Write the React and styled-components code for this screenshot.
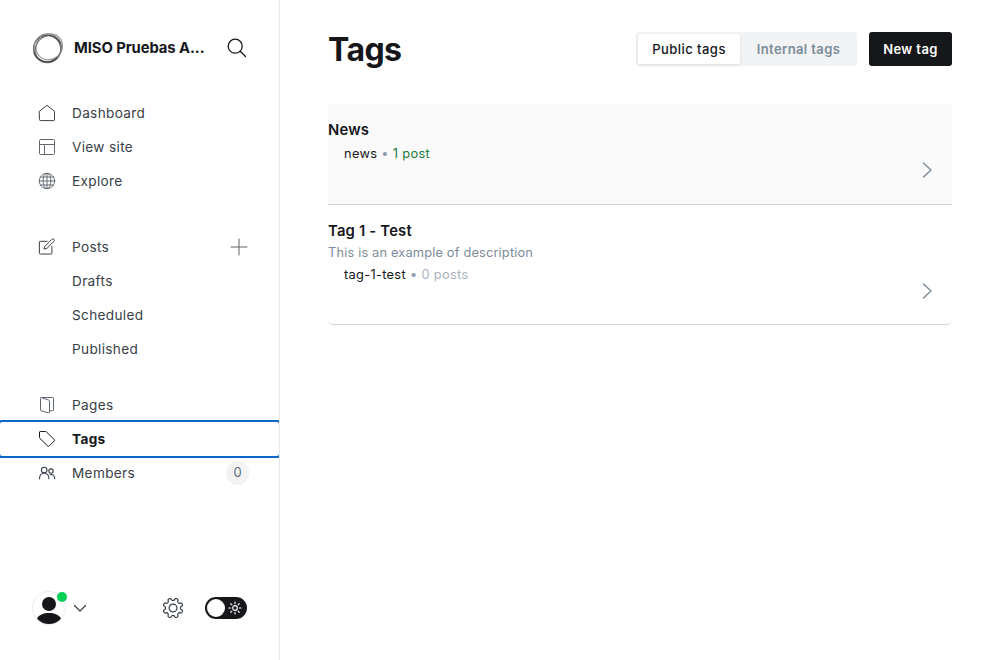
import React from "react";
import styled, { createGlobalStyle } from "styled-components";

const Global = createGlobalStyle`
  * { box-sizing: border-box; }
  body { margin: 0; background: #fff; font-family: Inter, "Liberation Sans", sans-serif; color: #15171a; -webkit-font-smoothing: antialiased; }
  h1, h3, p { margin: 0; }
  button { font-family: inherit; border: 0; cursor: pointer; }
  svg { display: block; fill: none; stroke: currentColor; stroke-linecap: round; stroke-linejoin: round; flex: none; }
`;

const Page = styled.div`
  display: flex;
  height: 660px;
  overflow: hidden;
`;
const Sidebar = styled.nav`
  width: 280px;
  flex: none;
  display: flex;
  flex-direction: column;
  overflow: hidden;
  border-right: 1px solid #e6e9eb;
`;
const Brand = styled.header`
  display: flex;
  align-items: center;
  height: 96px;
  padding: 0 32px;
`;
const SiteName = styled.div`
  margin-left: 10px;
  width: 134px;
  font-size: 14.8px;
  line-height: 20px;
  font-weight: 700;
  letter-spacing: -0.08px;
  white-space: nowrap;
`;
const SearchButton = styled.button`
  margin-left: auto;
  padding: 0;
  background: none;
  color: #15171a;
`;
const NavGroup = styled.div`
  display: flex;
  flex-direction: column;
  margin-bottom: ${(p) => p.$gap}px;
`;
const NavItem = styled.a`
  display: flex;
  align-items: center;
  height: 34px;
  padding: 0 30px 0 38px;
  font-size: 13.6px;
  letter-spacing: 0.34px;
  color: ${(p) => (p.$active ? "#15171a" : "#394047")};
  font-weight: ${(p) => (p.$active ? 700 : 400)};
  outline: ${(p) => (p.$active ? "2px solid #0a66c8" : "none")};
  border-radius: 2px;
`;
const NavLabel = styled.span`
  line-height: 20px;
  padding-bottom: 1px;
`;
const IconSlot = styled.span`
  width: 18px;
  margin-right: 16px;
  display: flex;
  justify-content: center;
  color: ${(p) => (p.$soft ? "#60676e" : "inherit")};
`;
const PlusSlot = styled.span`
  margin-left: auto;
  margin-right: 1px;
  color: #5d6369;
`;
const Count = styled.span`
  margin-left: auto;
  width: 23px;
  height: 24px;
  border-radius: 12px;
  background: #f1f3f4;
  color: #626d79;
  font-size: 13px;
  line-height: 23px;
  letter-spacing: 0;
  text-align: center;
`;
const Footer = styled.footer`
  display: flex;
  align-items: center;
  margin-top: auto;
  height: 104px;
  padding: 0 32px;
`;
const Avatar = styled.div`
  position: relative;
  width: 34px;
  height: 34px;
`;
const Presence = styled.span`
  position: absolute;
  top: 1px;
  right: -1px;
  width: 10px;
  height: 10px;
  border-radius: 50%;
  background: #00d154;
`;
const ChevronSlot = styled.span`
  margin-left: 7px;
  color: #394047;
`;
const GearSlot = styled.span`
  margin-left: auto;
  margin-right: 21px;
  color: #394047;
`;
const Toggle = styled.div`
  display: flex;
  align-items: center;
  justify-content: space-between;
  width: 42px;
  height: 22px;
  padding: 0 5px 0 2px;
  border-radius: 11px;
  background: #15171a;
  color: #fff;
`;
const Knob = styled.span`
  width: 18px;
  height: 18px;
  border-radius: 50%;
  background: #fff;
`;
const Main = styled.main`
  flex: 1;
  padding: 32px 48px;
`;
const TitleBar = styled.header`
  display: flex;
  align-items: center;
  height: 34px;
  margin-bottom: 38px;
`;
const Title = styled.h1`
  flex: 1;
  font-size: 32px;
  line-height: 36px;
  font-weight: 700;
  letter-spacing: -0.6px;
  padding-top: 2px;
`;
const Segment = styled.div`
  display: flex;
  width: 221px;
  height: 34px;
  padding: 2px;
  border-radius: 3px;
  background: #f1f3f4;
`;
const SegmentButton = styled.button`
  width: ${(p) => p.$width}px;
  padding: 0 0 0 ${(p) => (p.$on ? 0 : 2)}px;
  height: 30px;
  border-radius: 2px;
  font-size: 13px;
  font-weight: ${(p) => (p.$on ? 500 : 600)};
  letter-spacing: ${(p) => (p.$on ? 0.46 : 0.38)}px;
  background: ${(p) => (p.$on ? "#fff" : "transparent")};
  color: ${(p) => (p.$on ? "#15171a" : "#7c8b9a")};
  box-shadow: ${(p) => (p.$on ? "0 1px 4px -1px rgba(0,0,0,.15)" : "none")};
`;
const Primary = styled.button`
  width: 83px;
  height: 34px;
  margin-left: 12px;
  padding: 0;
  border-radius: 3px;
  background: #15171a;
  color: #fff;
  font-size: 13px;
  font-weight: 600;
  letter-spacing: 0.42px;
`;
const List = styled.div`
  display: flex;
  flex-direction: column;
`;
const Row = styled.article`
  display: flex;
  justify-content: space-between;
  height: ${(p) => p.$height}px;
  padding-top: 16px;
  border-bottom: 1px solid #ced4d9;
  background: ${(p) => (p.$hover ? "#fafafa" : "#fff")};
  border-radius: ${(p) => (p.$hover ? "5px 5px 0 0" : "0 0 5px 5px")};
`;
const TagName = styled.h3`
  font-size: 14.8px;
  line-height: 20px;
  font-weight: 600;
  letter-spacing: 0.2px;
`;
const Description = styled.p`
  padding-top: 2px;
  font-size: 12.8px;
  line-height: 20px;
  letter-spacing: 0.17px;
  color: #7c8b9a;
`;
const Meta = styled.p`
  padding: ${(p) => p.$top}px 0 0 16px;
  font-size: 12.8px;
  line-height: 20px;
  letter-spacing: 0.32px;
`;
const Dot = styled.span`
  color: #8e9cac;
  margin: 0 4px;
`;
const Posts = styled.span`
  color: ${(p) => (p.$some ? "#18793a" : "#abb4be")};
`;
const Arrow = styled.span`
  align-self: flex-end;
  margin: 0 20px ${(p) => p.$bottom}px 0;
  color: #7c8b9a;
`;

const I = ({ size = 18, w = 1, box = 18, children }) => (
  <svg width={size} height={size} viewBox={`0 0 ${box} ${box}`} strokeWidth={w}>{children}</svg>
);
const Logo = () => (
  <I size={32} box={32}>
    <circle cx="15.2" cy="17" r="13.6" stroke="#555" strokeWidth="1.3" />
    <ellipse cx="15.6" cy="16" rx="13.6" ry="14.3" stroke="#8a8a8a" strokeWidth="1.1" />
    <ellipse cx="17.3" cy="14.9" rx="12.6" ry="13.6" transform="rotate(50 17.3 14.9)" stroke="#999" strokeWidth="1.2" />
    <ellipse cx="15.5" cy="16.8" rx="14" ry="12.4" transform="rotate(-50 16 16)" stroke="#777" strokeWidth="1.2" />
    <path d="M2.3 21C5.5 29.5 17 33 25 26" stroke="#444" strokeWidth="1.2" />
    <path d="M10 4.3C17 1.5 26 4.5 28.5 12" stroke="#444" strokeWidth="0.9" />
  </I>
);
const Search = () => (
  <I size={20} box={20} w={1.3}><circle cx="8.2" cy="8.2" r="7" /><path d="M13.2 13.2 18.5 18.5" /></I>
);
const Home = () => <I><path d="M1.5 7.2 9 1.3l7.5 5.9v8.6a.8.8 0 0 1-.8.8H2.3a.8.8 0 0 1-.8-.8z" /></I>;
const Site = () => (
  <I><rect x="1.5" y="1.5" width="15" height="15" rx="1" /><path d="M1.5 6.5h15M6.5 6.5v10" /></I>
);
const Globe = () => (
  <I w={0.95}><circle cx="9" cy="9" r="7.7" /><ellipse cx="9" cy="9" rx="3.9" ry="7.7" /><path d="M1.3 9h15.4M2.7 5h12.6M2.7 13h12.6M9 1.3v15.4" /></I>
);
const Compose = () => (
  <I><path d="M9 3.3H2.2a.8.8 0 0 0-.8.8v11.1a.8.8 0 0 0 .8.8h10.9a.8.8 0 0 0 .8-.8V8.5" /><path d="m7 8.2 6.9-6.9c1.4-1.2 3.4.7 2.1 2L9.1 10.2 6.3 11z" /></I>
);
const PagesIcon = () => (
  <I>
    <path d="M12 14.7h2.700a.8.8 0 0 0 .8-.8V2.300a.8.8 0 0 0-.8-.8H3.300a.8.8 0 0 0-.8.8v11.700c0 .4.200.7.600.8l7.600 2.100c.5.1.8-.1.8-.6V5.200c0-.5-.2-.8-.6-1L3.300 1.500" />
  </I>
);
const TagIcon = () => (
  <I><path d="M1.5 2.3v5.1c0 .4.1.7.4 1l7.900 7.700c.4.4.9.4 1.300 0l5.200-5.200c.4-.4.4-.9 0-1.300L8.400 1.900c-.3-.3-.6-.4-1-.4H2.300a.8.8 0 0 0-.8.8z" /></I>
);
const MembersIcon = () => (
  <I w={1.1}><circle cx="6.2" cy="6" r="2.800" /><circle cx="13" cy="7.100" r="2.200" /><path d="M1.500 14.700c0-3.600 1.700-5.500 4.700-5.500s4.700 1.900 4.700 5.500M12 10.700c2.800-.9 4.700.9 4.700 4" /></I>
);
const Plus = () => <I><path d="M9 1v16M1 9h16" /></I>;
const Person = () => (
  <svg width="34" height="34" viewBox="0 0 34 34">
    <circle cx="17" cy="17" r="16.5" stroke="#e9ebed" />
    <g fill="#15171a" stroke="none">
      <circle cx="17" cy="13" r="7" />
      <path d="M5 27.8C8 20 26 20 29 27.8A16.5 16.5 0 0 1 5 27.8z" />
    </g>
  </svg>
);
const Gear = () => {
  const pts = [];
  for (let i = 0; i < 128; i++) {
    const a = (i / 128) * Math.PI * 2;
    const r = 8.75 + 1.25 * Math.tanh(2.2 * Math.cos(8 * a + Math.PI));
    pts.push(`${(11 + r * Math.sin(a)).toFixed(2)} ${(11 - r * Math.cos(a)).toFixed(2)}`);
  }
  return (
    <I size={22} box={22} w={1.2}><path d={`M${pts.join("L")}Z`} /><circle cx="11" cy="11" r="3.9" /></I>
  );
};
const Sun = () => (
  <I size={14} box={12} w={0.95}>
    <circle cx="6" cy="6" r="2" />
    <path d="M6 .8v1.500M6 9.700v1.500M.8 6h1.500M9.700 6h1.500M2.300 2.300l1.100 1.100M8.600 8.600l1.100 1.100M9.700 2.300 8.600 3.400M3.400 8.600 2.300 9.700" />
  </I>
);
const Next = () => <svg width="10" height="16" viewBox="0 0 10 16" strokeWidth="1.4"><path d="m1.5 1 7.500 7-7.500 7" /></svg>;

const Item = ({ icon, children, active, soft, extra }) => (
  <NavItem $active={active}><IconSlot $soft={soft}>{icon}</IconSlot><NavLabel>{children}</NavLabel>{extra}</NavItem>
);

export default function App() {
  return (
    <Page>
      <Global />
      <Sidebar>
        <Brand>
          <Logo />
          <SiteName>MISO Pruebas A...</SiteName>
          <SearchButton aria-label="Search"><Search /></SearchButton>
        </Brand>
        <NavGroup $gap={32}>
          <Item icon={<Home />}>Dashboard</Item>
          <Item soft icon={<Site />}>View site</Item>
          <Item soft icon={<Globe />}>Explore</Item>
        </NavGroup>
        <NavGroup $gap={22}>
          <Item icon={<Compose />} extra={<PlusSlot><Plus /></PlusSlot>}>Posts</Item>
          <Item>Drafts</Item>
          <Item>Scheduled</Item>
          <Item>Published</Item>
        </NavGroup>
        <NavGroup $gap={0}>
          <Item soft icon={<PagesIcon />}>Pages</Item>
          <Item icon={<TagIcon />} active>Tags</Item>
          <Item icon={<MembersIcon />} extra={<Count>0</Count>}>Members</Item>
        </NavGroup>
        <Footer>
          <Avatar><Person /><Presence /></Avatar>
          <ChevronSlot><svg width="14" height="10" viewBox="0 0 14 10" strokeWidth="1.2"><path d="m1.5 2.5 5.5 5.500 5.500-5.500" /></svg></ChevronSlot>
          <GearSlot><Gear /></GearSlot>
          <Toggle><Knob /><Sun /></Toggle>
        </Footer>
      </Sidebar>
      <Main>
        <TitleBar>
          <Title>Tags</Title>
          <Segment>
            <SegmentButton $on $width={102}>Public tags</SegmentButton>
            <SegmentButton $width={115}>Internal tags</SegmentButton>
          </Segment>
          <Primary>New tag</Primary>
        </TitleBar>
        <List>
          <Row $hover $height={101}>
            <div>
              <TagName>News</TagName>
              <Meta $top={4}>news<Dot>•</Dot><Posts $some>1 post</Posts></Meta>
            </div>
            <Arrow $bottom={26}><Next /></Arrow>
          </Row>
          <Row $height={120}>
            <div>
              <TagName>Tag 1 - Test</TagName>
              <Description>This is an example of description</Description>
              <Meta $top={2}>tag-1-test<Dot>•</Dot><Posts>0 posts</Posts></Meta>
            </div>
            <Arrow $bottom={25}><Next /></Arrow>
          </Row>
        </List>
      </Main>
    </Page>
  );
}
